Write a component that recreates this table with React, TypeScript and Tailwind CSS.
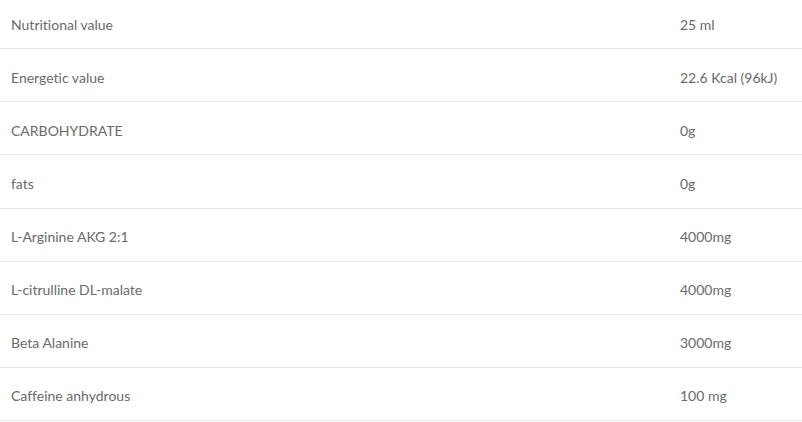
const rows: [string, string][] = [
  ["Nutritional value", "25 ml"],
  ["Energetic value", "22.6 Kcal (96kJ)"],
  ["CARBOHYDRATE", "0g"],
  ["fats", "0g"],
  ["L-Arginine AKG 2:1", "4000mg"],
  ["L-citrulline DL-malate", "4000mg"],
  ["Beta Alanine", "3000mg"],
  ["Caffeine anhydrous", "100 mg"],
]

export default function App() {
  return (
    <div className="h-[422px] w-[802px] overflow-hidden bg-white font-['Lato',sans-serif] text-[14px] text-[#6a6a6a] [font-variant-ligatures:none]">
      <div className="-mt-[4px]">
        {rows.map(([name, value]) => (
          <div key={name} className="flex h-[53.14px] items-center border-b border-[#e6e6e6] pt-[4px]">
            <div className="w-[680px] pl-[11px]">{name}</div>
            <div className="flex-1">{value}</div>
          </div>
        ))}
      </div>
    </div>
  )
}
